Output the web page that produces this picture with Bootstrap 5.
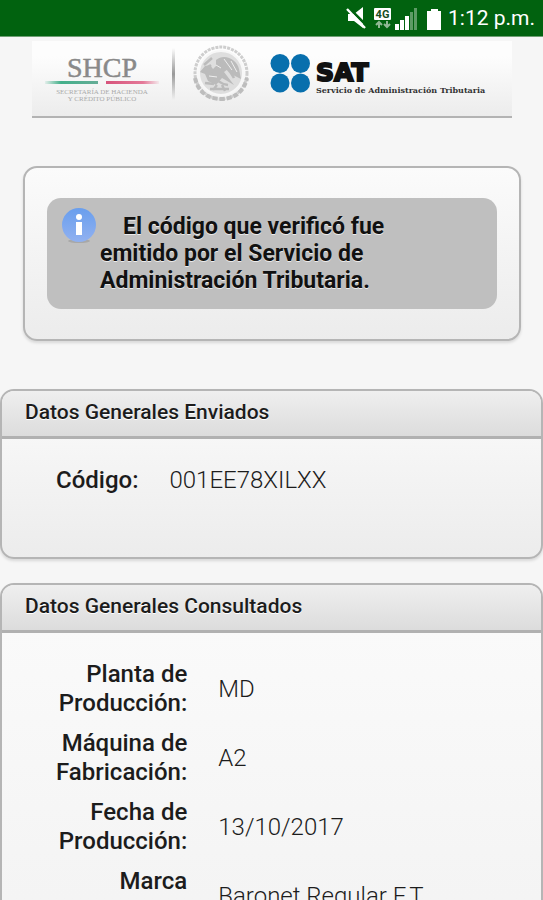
<!DOCTYPE html>
<html lang="es">
<head>
<meta charset="utf-8">
<meta name="viewport" content="width=device-width, initial-scale=1">
<title>Verificación de código - SAT</title>
<link rel="stylesheet" href="https://cdn.jsdelivr.net/npm/bootstrap@5.3.0/dist/css/bootstrap.min.css">
<style>
body { background: #f6f6f6; color: #1c1c1c; font-family: Roboto, "Liberation Sans", sans-serif; }
.status-bar { background: #01620f; height: 37px; font-size: 21px; line-height: 37px; border-bottom: 1px solid #6f9f74; }
.page-body { min-height: 0; scrollbar-width: none; }
.brand-strip { margin: 4px 31px 0 32px; height: 77px; background: linear-gradient(#fdfdfd 20%, #ececec); border-bottom: 2px solid #b3b3b3; }
.brand-art { display: block; width: 480px; max-width: 100%; height: 75px; }
.panel { border: 2px solid #b5b5b5; border-radius: 14px; background: linear-gradient(#fbfbfb, #ececec); box-shadow: 0 2px 3px #0000001f; overflow: hidden; }
.notice-panel { margin: 48px 22px 48px 23px; padding: 30px 22px; }
.notice { background: #bfbfbf; border-radius: 14px; padding: 15px 60px 15px 53px; position: relative; font-size: 23px; line-height: 27px; font-weight: 700; color: #111; text-shadow: 0 1px 0 #ececec; }
.notice p { text-indent: 23px; }
.notice-icon { position: absolute; left: 13px; top: 8px; }
.panel-title { background: linear-gradient(#efefef, #dcdcdc); border-bottom: 3px solid #b1b1b1; font-size: 21px; line-height: 24px; font-weight: 500; padding: 9px 23px 12px; text-shadow: 0 1px 0 #fff; }
.panel-body { padding: 22px 54px; }
.sent { min-height: 118px; }
.consulted { min-height: 620px; }
.data-list { font-size: 24px; line-height: 29px; }
.data-list th { font-weight: 500; text-align: right; padding: 5px 16px 6px 0; white-space: nowrap; }
.data-list td { font-weight: 300; padding: 5px 0 6px 15px; vertical-align: middle; }
</style>
<script src="https://cdn.jsdelivr.net/npm/bootstrap@5.3.0/dist/js/bootstrap.bundle.min.js"></script>
</head>
<body class="vh-100 d-flex flex-column overflow-hidden">
<header class="status-bar d-flex justify-content-end align-items-center text-white flex-shrink-0 pe-2">
  <svg width="100" height="36" viewBox="0 0 100 36" aria-hidden="true">
    <path d="M4 14h6l9-7v21l-9-7H4z" fill="#fff"/>
    <path d="M5 8l18 18" stroke="#01620f" stroke-width="2.500"/><path d="M3 9l18 19" stroke="#fff" stroke-width="2.4"/>
    <rect x="30" y="8" width="17" height="12" rx="1" fill="#fff"/>
    <text x="38.500" y="18" text-anchor="middle" font-size="11" font-weight="700" fill="#174d20">4G</text>
    <path d="M35 28v-6m-3 3l3-3 3 3M43 21v6m-3-3l3 3 3-3" fill="none" stroke="#91b895" stroke-width="2"/>
    <path d="M51 24h4v6h-4zM56 20h4v10h-4zM61 16h4v14h-4z" fill="#fff"/><path d="M66 12h3v18h-3zM70 8h3v22h-3z" fill="#5d9b65"/>
    <path d="M83 12v-1h4V9h7v2h3v19H83z" fill="#fff"/>
  </svg>
  <time class="ms-1" datetime="13:12">1:12 p.m.</time>
</header>
<main class="page-body flex-fill overflow-auto">
  <div class="brand-strip">
    <svg class="brand-art" viewBox="0 0 480 75" role="img" aria-label="SHCP y SAT">
      <defs>
        <linearGradient id="green"><stop stop-color="#43b08a" stop-opacity=".1"/><stop offset=".3" stop-color="#43b08a"/><stop offset="1" stop-color="#66ad97"/></linearGradient>
        <linearGradient id="red"><stop stop-color="#d7547c"/><stop offset=".7" stop-color="#e47998"/><stop offset="1" stop-color="#e47998" stop-opacity=".1"/></linearGradient>
        <linearGradient id="bar" x2="0" y2="1"><stop stop-color="#999" stop-opacity="0"/><stop offset=".5" stop-color="#999"/><stop offset="1" stop-color="#999" stop-opacity="0"/></linearGradient>
      </defs>
      <g font-family="Liberation Serif, serif" text-anchor="middle" fill="#898989">
        <text x="70" y="36" font-size="28" stroke="#898989" stroke-width=".5">SHCP</text>
        <text x="70" y="53" font-size="7" fill="#aaa">SECRETARÍA DE HACIENDA</text>
        <text x="70" y="60" font-size="7" fill="#aaa">Y CRÉDITO PÚBLICO</text>
      </g>
      <rect x="13" y="40" width="53" height="3" fill="url(#green)"/><rect x="74" y="40" width="53" height="3" fill="url(#red)"/>
      <rect x="140" y="7" width="3" height="52" fill="url(#bar)"/>
      <g fill="none">
        <circle cx="189" cy="32" r="26" stroke="#cecece" stroke-width="3" stroke-dasharray="3 1"/>
        <path d="M163 37c3 14 13 21 26 21s23-7 26-21" stroke="#bdbdbd" stroke-width="4" stroke-dasharray="5 2"/>
        <circle cx="189" cy="32" r="22" fill="#dedede" stroke="#f7f7f7" stroke-width="2"/>
        <path d="M184 19c8-7 21-1 23 9l2 10-8-4-5-6-4 3 10 13-12-7-6 7-8-4-3-7-5-2 5-6 5-1 3 4 3-3z" fill="#bbb"/>
        <path d="M172 24l8-7m-10 14l9-7m-6 18l9 1m-4 5h19m-11-27c7 3 12 8 16 16m-23-5c4 7 10 11 17 12M181 49l4-5m8 6l-3-6" stroke="#bbb" stroke-width="2.500"/>
        <path d="M184 24l5 3m3-9l8 11m-1-9l6 11M177 35l8 1" stroke="#eee" stroke-width="1"/>
      </g>
      <g fill="#086fad"><circle cx="248" cy="22.500" r="9.500"/><circle cx="268.500" cy="22.500" r="9.500"/><circle cx="248" cy="42" r="9.500"/><circle cx="268.500" cy="42" r="9.500"/></g>
      <text x="284" y="40" font-family="DejaVu Sans, sans-serif" font-size="25" font-weight="700" fill="#111" stroke="#111" stroke-width="2">SAT</text>
      <text x="284" y="52" font-family="DejaVu Serif, serif" font-size="8" font-weight="700" fill="#333">Servicio de Administración Tributaria</text>
    </svg>
  </div>
  <section class="panel notice-panel">
    <div class="notice">
      <svg class="notice-icon" width="38" height="40" viewBox="0 0 38 40" aria-hidden="true">
        <defs><linearGradient id="info" x2="0" y2="1"><stop stop-color="#699eed"/><stop offset="1" stop-color="#91b1f0"/></linearGradient></defs>
        <ellipse cx="19" cy="35" rx="11" ry="2" fill="#a8a8a8"/><circle cx="19" cy="19" r="17" fill="url(#info)"/>
        <circle cx="19" cy="11" r="3" fill="#fff"/><path d="M16 16h6v13h-6z" fill="#fff"/>
      </svg>
      <p class="mb-0">El código que verificó fue<br>emitido por el Servicio de<br>Administración Tributaria.</p>
    </div>
  </section>
  <section class="panel mb-4">
    <h2 class="panel-title mb-0">Datos Generales Enviados</h2>
    <div class="panel-body sent">
      <table class="data-list"><tbody><tr><th scope="row">Código:</th><td>001EE78XILXX</td></tr></tbody></table>
    </div>
  </section>
  <section class="panel">
    <h2 class="panel-title mb-0">Datos Generales Consultados</h2>
    <div class="panel-body consulted">
      <table class="data-list"><tbody>
        <tr><th scope="row">Planta de<br>Producción:</th><td>MD</td></tr>
        <tr><th scope="row">Máquina de<br>Fabricación:</th><td>A2</td></tr>
        <tr><th scope="row">Fecha de<br>Producción:</th><td>13/10/2017</td></tr>
        <tr><th scope="row">Marca<br>&nbsp;</th><td>Baronet Regular F.T.</td></tr>
      </tbody></table>
    </div>
  </section>
</main>
</body>
</html>
